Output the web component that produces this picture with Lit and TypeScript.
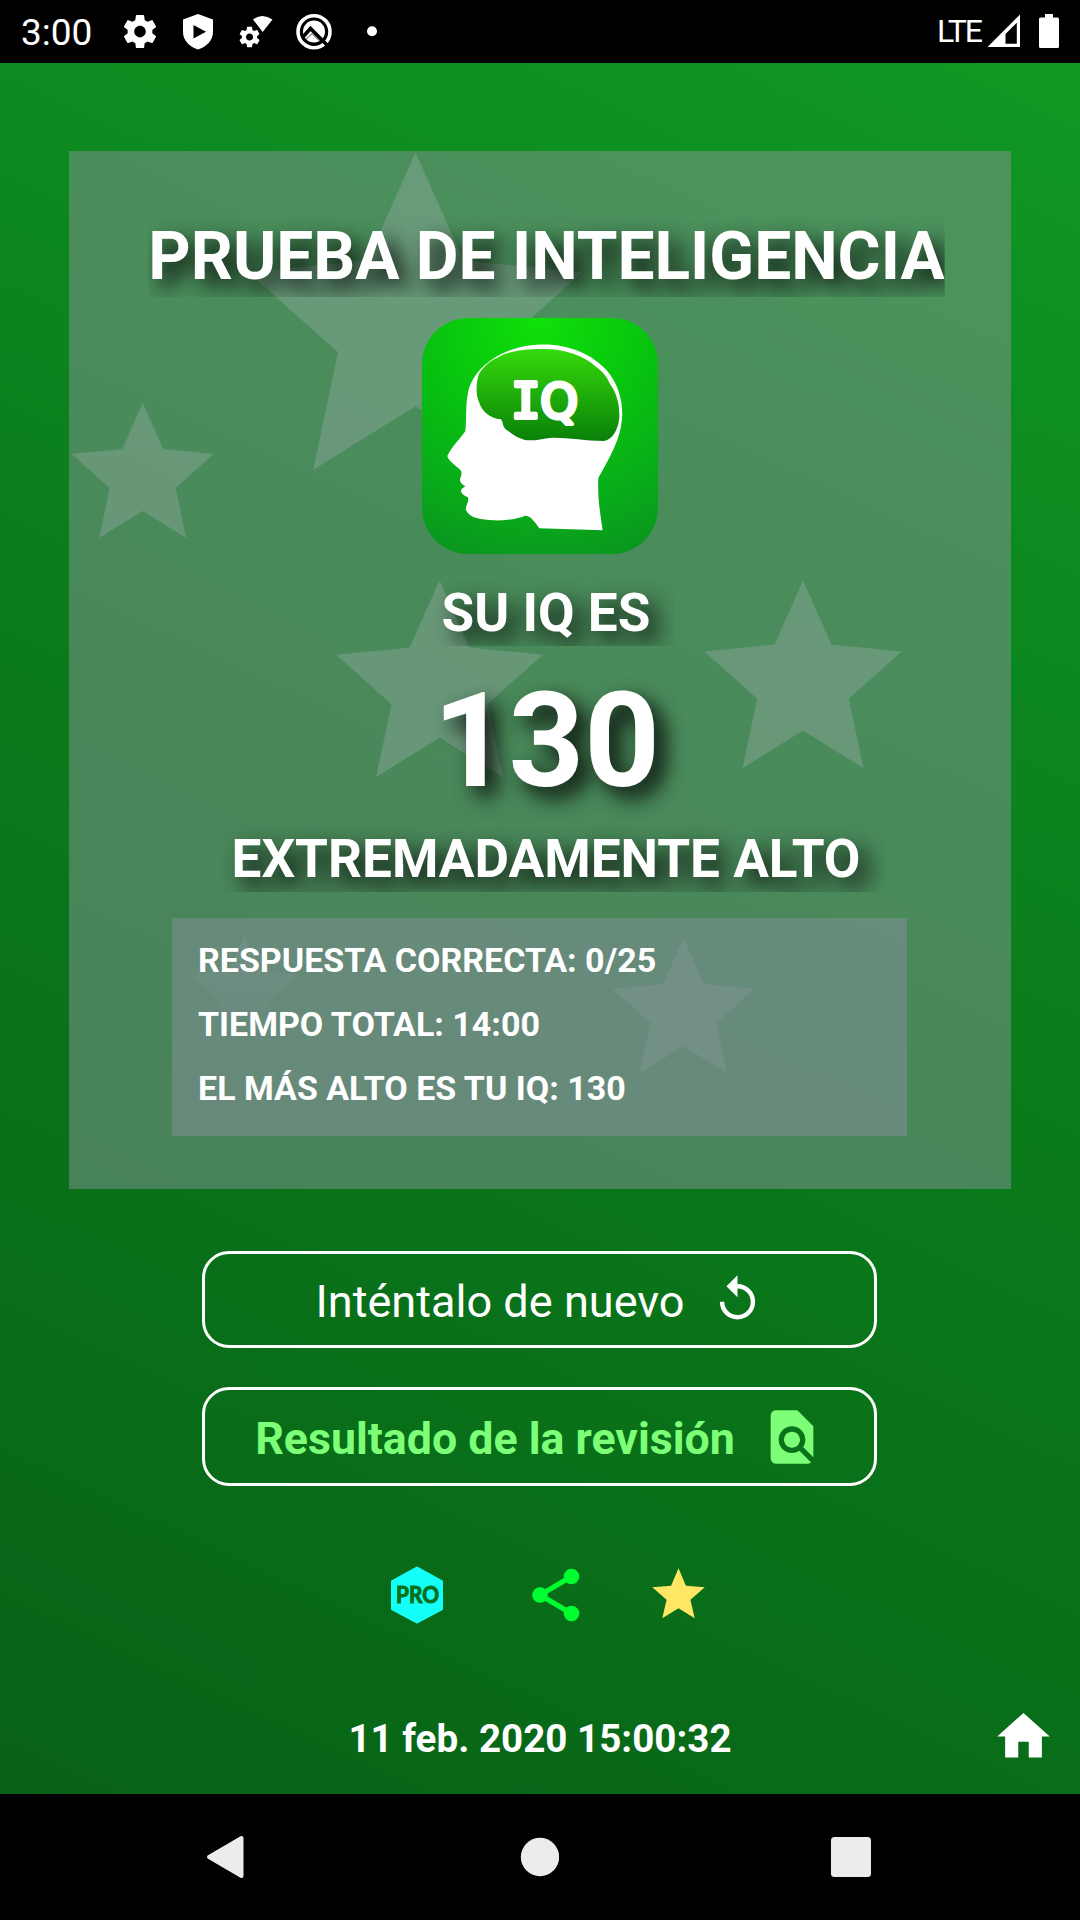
import { LitElement, html, css, svg } from "lit";
import { customElement } from "lit/decorators.js";

const GEAR =
  "M19.43 12.98c.04-.32.07-.64.07-.98s-.03-.66-.07-.98l2.11-1.65c.19-.15.24-.42.12-.64l-2-3.46c-.12-.22-.39-.3-.61-.22l-2.49 1c-.52-.4-1.08-.73-1.69-.98l-.38-2.65C14.46 2.18 14.25 2 14 2h-4c-.25 0-.46.18-.49.42l-.38 2.65c-.61.25-1.17.59-1.69.98l-2.49-1c-.23-.09-.49 0-.61.22l-2 3.46c-.13.22-.07.49.12.64l2.11 1.65c-.04.32-.07.65-.07.98s.03.66.07.98l-2.11 1.65c-.19.15-.24.42-.12.64l2 3.46c.12.22.39.3.61.22l2.49-1c.52.4 1.08.73 1.69.98l.38 2.65c.03.24.24.42.49.42h4c.25 0 .46-.18.49-.42l.38-2.65c.61-.25 1.17-.59 1.69-.98l2.49 1c.23.09.49 0 .61-.22l2-3.46c.12-.22.07-.49-.12-.64l-2.11-1.65zM12 15.5c-1.93 0-3.5-1.57-3.5-3.5s1.57-3.5 3.5-3.5 3.5 1.57 3.5 3.5-1.57 3.5-3.5 3.5z";

const STAR =
  "M0 0L20.5 46L71 51L33 85L43.5 135L0 108L-43.5 135L-33 85L-71 51L-20.5 46Z";

/* x and y of the top tip inside the card, scale, opacity */
const STARS = [
  { x: 346.5, y: 1.5, s: 2.35, o: 0.3 },
  { x: 73.7, y: 252, s: 1, o: 0.3 },
  { x: 370.5, y: 429.5, s: 1.455, o: 0.3 },
  { x: 734, y: 429.5, s: 1.39, o: 0.3 },
  { x: 614.5, y: 787, s: 1, o: 0.3 },
];

@customElement("status-bar")
class StatusBar extends LitElement {
  static styles = css`
    :host {
      display: flex;
      align-items: center;
      justify-content: space-between;
      box-sizing: border-box;
      height: 63px;
      background: #000;
      color: #fff;
      padding: 0 20px 0 21px;
      font-family: Roboto, sans-serif;
    }
    .left,
    .right {
      display: flex;
      align-items: center;
    }
    .time {
      font-size: 37px;
      line-height: 44px;
      margin-top: 2px;
      width: 72px;
    }
    .icons {
      display: block;
      margin-left: 27px;
    }
    .lte {
      font-size: 32px;
      line-height: 40px;
      letter-spacing: -2.2px;
      margin-top: -1px;
      width: 50px;
    }
    .signal {
      display: block;
    }
  `;
  render() {
    return html`
      <div class="left">
        <span class="time">3:00</span>
        <svg class="icons" width="260" height="63" viewBox="120 0 260 63" fill="#fff">
          <path transform="translate(120.2 11.8) scale(1.65)" d=${GEAR} />
          <path
            fill-rule="evenodd"
            d="M198 14L213 19.500V32C213 40 207 46.500 198 49.500C189 46.500 183 40 183 32V19.500ZM193.500 25V38.500L206 31.700Z"
          />
          <path transform="translate(237.300 24.800) scale(1.02)" d=${GEAR} />
          <path d="M253 19.500Q262.500 12.500 272.500 19.500L262.700 32Z" />
          <circle cx="314" cy="31.700" r="16" fill="none" stroke="#fff" stroke-width="3.600" />
          <circle cx="314" cy="31.500" r="11" />
          <path d="M303 37L310.500 28.500L314 32L330 48" fill="none" stroke="#000" stroke-width="3.600" />
          <path d="M304.500 41L312 33.500L320 41.500" fill="none" stroke="#000" stroke-width="0.800" />
          <circle cx="372" cy="31.200" r="5" />
        </svg>
      </div>
      <div class="right">
        <span class="lte">LTE</span>
        <svg class="signal" width="73" height="63" viewBox="987 0 73 63" fill="#fff">
          <path fill-rule="evenodd" d="M987.500 47L1020 14.500V47ZM1005.500 34V43.700H1016.800V22.700Z" />
          <path d="M1045 14H1053V17.500H1057.500Q1059 17.500 1059 19V46.500Q1059 48 1057.500 48H1040.500Q1039 48 1039 46.500V19Q1039 17.500 1040.500 17.500H1045Z" />
        </svg>
      </div>
    `;
  }
}

@customElement("iq-logo")
class IqLogo extends LitElement {
  static styles = css`
    :host {
      display: block;
      width: 236px;
      height: 236px;
    }
    svg {
      display: block;
    }
    .iq {
      font-family: "DejaVu Sans Mono", monospace;
      font-weight: 400;
      font-size: 148px;
    }
    .round {
      font-family: "DejaVu Sans", sans-serif;
      font-size: 144px;
    }
  `;
  render() {
    return html`
      <svg width="236" height="236" viewBox="36 38 708 708">
        <defs>
          <radialGradient id="tile" gradientUnits="userSpaceOnUse" cx="390" cy="50" r="740">
            <stop offset="0" stop-color="#0fe00a" />
            <stop offset="0.4" stop-color="#08c60e" />
            <stop offset="0.8" stop-color="#08a81a" />
            <stop offset="1" stop-color="#0a961f" />
          </radialGradient>
          <linearGradient id="brain" x1="0" y1="0" x2="0" y2="1">
            <stop offset="0" stop-color="#35da0c" />
            <stop offset="1" stop-color="#0a8009" />
          </linearGradient>
        </defs>
        <rect x="36" y="38" width="708" height="708" rx="138" fill="url(#tile)" />
        <path
          fill="#fff"
          d="M380 118C470 112 545 145 590 195C625 235 640 290 636 340C632 400 600 455 565 518C562 570 570 625 578 675L388 669C375 650 362 631 345 631C320 641 290 646 250 645C215 643 180 640 168 615C164 602 178 592 174 576C160 570 150 562 154 552L166 543C155 538 147 528 151 518C155 510 156 502 152 495C142 483 115 468 112 452C125 425 150 400 166 378C170 340 166 300 174 262C188 190 270 125 380 118Z"
        />
        <path
          fill="url(#brain)"
          d="M400 131C460 130 522 150 558 184C580 200 592 216 600 236C620 264 629 295 628 335C626 370 608 405 580 407C530 406 470 396 425 397C395 400 370 408 345 404C315 396 300 380 285 370C276 358 280 348 272 342C240 340 214 315 208 292C196 270 198 230 207 205C220 185 240 165 262 157C290 138 350 130 400 131Z"
        />
        <text
          class="iq"
          x="303"
          y="337"
          fill="#fff"
          stroke="#fff"
          stroke-width="12"
          stroke-linejoin="round"
        >I<tspan class="round" x="391">Q</tspan></text>
      </svg>
    `;
  }
}

@customElement("result-card")
class ResultCard extends LitElement {
  static styles = css`
    :host {
      display: flex;
      flex-direction: column;
      align-items: center;
      position: relative;
      box-sizing: border-box;
      width: 942px;
      height: 1038px;
      padding-top: 67px;
      background: rgba(136, 147, 152, 0.5);
      font-weight: 700;
    }
    .stars {
      position: absolute;
      left: 0;
      top: 0;
    }
    .title,
    .label,
    .score,
    .logo,
    .info {
      position: relative;
      flex: none;
      white-space: nowrap;
    }
    .title,
    .label,
    .score {
      text-shadow: 10px 10px 21px rgba(0, 0, 0, 0.95);
    }
    .title {
      font-size: 65.8px;
      line-height: 77px;
      height: 79px;
      margin-left: 13px;
      clip-path: inset(-20px 0 0 0);
    }
    .logo {
      margin-top: 21px;
    }
    .label {
      font-size: 53.1px;
      line-height: 64px;
      height: 65px;
      margin-left: 12px;
      clip-path: inset(-20px -24px 0 -10px);
    }
    .first {
      margin-top: 27px;
    }
    .score {
      font-size: 132px;
      line-height: 155px;
      margin: 18px 0 8px 13px;
    }
    .info {
      box-sizing: border-box;
      width: 735px;
      height: 218px;
      margin: 26px 1px 0 0;
      padding: 10px 26px;
      background: rgba(124, 141, 145, 0.6);
      font-size: 34px;
      line-height: 64px;
    }
  `;
  render() {
    return html`
      <svg class="stars" width="942" height="1038" viewBox="0 0 942 1038">
        <defs>
          <linearGradient id="fade" x1="0" y1="0" x2="0" y2="1">
            <stop offset="0" stop-color="#b1b7c0" stop-opacity="0.24" />
            <stop offset="1" stop-color="#b1b7c0" stop-opacity="0" />
          </linearGradient>
        </defs>
        ${STARS.map(
          (p) => svg`<path d=${STAR} transform="translate(${p.x} ${p.y}) scale(${p.s})" fill="#b1b7c0" fill-opacity=${p.o} />`
        )}
        <path d=${STAR} transform="translate(175.500 785) scale(0.76)" fill="url(#fade)" />
      </svg>
      <div class="title">PRUEBA DE INTELIGENCIA</div>
      <iq-logo class="logo"></iq-logo>
      <div class="label first">SU IQ ES</div>
      <div class="score">130</div>
      <div class="label">EXTREMADAMENTE ALTO</div>
      <div class="info">
        <div>RESPUESTA CORRECTA: 0/25</div>
        <div>TIEMPO TOTAL: 14:00</div>
        <div>EL MÁS ALTO ES TU IQ: 130</div>
      </div>
    `;
  }
}

@customElement("nav-bar")
class NavBar extends LitElement {
  static styles = css`
    :host {
      display: flex;
      align-items: center;
      justify-content: space-between;
      box-sizing: border-box;
      height: 126px;
      padding: 0 209px 0 206px;
      background: #000;
    }
    svg {
      display: block;
    }
  `;
  render() {
    return html`
      <svg width="40" height="44" viewBox="0 0 40 44">
        <path d="M3 22L35.500 3V41Z" fill="#ececec" stroke="#ececec" stroke-width="4" stroke-linejoin="round" />
      </svg>
      <svg width="40" height="40" viewBox="0 0 40 40"><circle cx="21" cy="20" r="19.200" fill="#ececec" /></svg>
      <svg width="40" height="40" viewBox="0 0 40 40"><rect width="40" height="40" rx="3.500" fill="#ececec" /></svg>
    `;
  }
}

@customElement("app-root")
class AppRoot extends LitElement {
  static styles = css`
    :host {
      display: flex;
      flex-direction: column;
      width: 1080px;
      height: 1920px;
      overflow: hidden;
      font-family: Roboto, sans-serif;
      color: #fff;
      background: #000;
    }
    .screen {
      box-sizing: border-box;
      height: 1731px;
      display: flex;
      flex-direction: column;
      align-items: center;
      padding-top: 88px;
      background: linear-gradient(25deg, #086217, #0a7b1b 52%, #109824);
    }
    .btn {
      box-sizing: border-box;
      flex: none;
      width: 675px;
      margin-right: 1px;
      border: 3px solid #fff;
      border-radius: 27px;
      display: flex;
      align-items: center;
      justify-content: center;
      white-space: nowrap;
    }
    .btn span {
      padding-top: 4px;
    }
    .btn svg {
      display: block;
      flex: none;
    }
    .again {
      height: 97px;
      margin-top: 62px;
      font-size: 45.1px;
      gap: 26px;
    }
    .review {
      height: 99px;
      margin-top: 39px;
      font-size: 44.7px;
      font-weight: 700;
      color: #7dff78;
      gap: 25px;
    }
    .links {
      align-self: stretch;
      display: flex;
      align-items: center;
      height: 63px;
      margin-top: 77px;
      padding-left: 391px;
    }
    .links svg {
      display: block;
    }
    .share {
      margin-left: 89px;
    }
    .rate {
      margin-left: 67px;
    }
    .pro {
      font-family: Lato, sans-serif;
      font-weight: 700;
      font-size: 22px;
    }
    .foot {
      align-self: stretch;
      display: grid;
      grid-template-columns: 1fr auto 1fr;
      align-items: center;
      margin-top: 79px;
      height: 63px;
    }
    .date {
      grid-column: 2;
      font-size: 38.6px;
      line-height: 46px;
      margin-top: 5px;
      font-weight: 700;
    }
    .home {
      display: block;
      justify-self: end;
      margin-right: 25px;
    }
  `;
  render() {
    return html`
      <status-bar></status-bar>
      <div class="screen">
        <result-card></result-card>
        <div class="btn again">
          <span>Inténtalo de nuevo</span>
          <svg width="53" height="53" viewBox="0 0 24 24" fill="#fff">
            <path d="M12 5V1L7 6l5 5V7c3.310 0 6 2.690 6 6s-2.690 6-6 6-6-2.690-6-6H4c0 4.420 3.580 8 8 8s8-3.580 8-8-3.580-8-8-8z" />
          </svg>
        </div>
        <div class="btn review">
          <span>Resultado de la revisión</span>
          <svg width="64" height="64" viewBox="0 0 24 24" fill="#7dff78">
            <path d="M20 19.590V8l-6-6H6c-1.100 0-1.990.9-1.990 2L4 20c0 1.100.89 2 1.990 2H18c.45 0 .85-.15 1.190-.4l-4.430-4.430c-.8.52-1.740.83-2.760.83-2.760 0-5-2.240-5-5s2.240-5 5-5 5 2.240 5 5c0 1.020-.31 1.960-.83 2.750L20 19.590zM9 13c0 1.660 1.340 3 3 3s3-1.340 3-3-1.340-3-3-3-3 1.340-3 3z" />
          </svg>
        </div>
        <div class="links">
          <svg width="52" height="58" viewBox="0 0 52 58">
            <path d="M26 2L50.500 15.500V43L26 56L1.500 43V15.500Z" fill="#14fff8" stroke="#14fff8" stroke-width="3" stroke-linejoin="round" />
            <text class="pro" x="5" y="37" fill="#0a7019" stroke="#0a7019" stroke-width="1" textLength="43" lengthAdjust="spacingAndGlyphs">PRO</text>
          </svg>
          <svg class="share" width="48" height="54" viewBox="0 0 48 54">
            <path d="M39.500 8.500L8 27L39.500 45.500" fill="none" stroke="#00ff2e" stroke-width="5" />
            <circle cx="8" cy="27" r="7.800" fill="#00ff2e" />
            <circle cx="39.500" cy="8.500" r="7.800" fill="#00ff2e" />
            <circle cx="39.500" cy="45.500" r="7.800" fill="#00ff2e" />
          </svg>
          <svg class="rate" width="63" height="63" viewBox="0 0 24 24" fill="#ffe763">
            <path d="M12 17.270L18.180 21l-1.640-7.030L22 9.240l-7.190-.61L12 2 9.190 8.630 2 9.240l5.460 4.730L5.820 21z" />
          </svg>
        </div>
        <div class="foot">
          <span class="date">11 feb. 2020 15:00:32</span>
          <svg class="home" width="63" height="63" viewBox="0 0 24 24" fill="#fff">
            <path d="M10 20v-6h4v6h5v-8h3L12 3 2 12h3v8z" />
          </svg>
        </div>
      </div>
      <nav-bar></nav-bar>
    `;
  }
}
